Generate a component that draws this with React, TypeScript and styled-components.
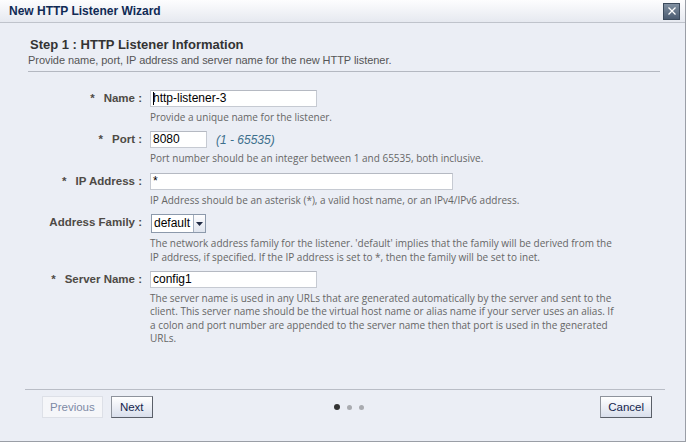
import React from 'react';
import styled, { createGlobalStyle } from 'styled-components';

const GlobalStyle = createGlobalStyle`
  html, body {
    margin: 0;
    padding: 0;
    background: #ebeef5;
  }
  body {
    font-family: "Liberation Sans", Arial, sans-serif;
  }
`;

const Dialog = styled.div`
  width: 686px;
  height: 442px;
  box-sizing: border-box;
  background: #ebeef5;
  border-right: 1px solid #9a9ea6;
  border-bottom: 1px solid #9a9ea6;
  display: flex;
  flex-direction: column;
`;

const TitleBar = styled.div`
  height: 23px;
  box-sizing: border-box;
  display: flex;
  align-items: center;
  justify-content: space-between;
  padding: 0 5px 0 9px;
  background: linear-gradient(#fdfdfe, #e6e9f0);
  border-bottom: 1px solid #bfc3cb;
`;

const Title = styled.div`
  font-size: 12px;
  font-weight: bold;
  color: #102a55;
`;

const CloseBox = styled.div`
  width: 17px;
  height: 17px;
  box-sizing: border-box;
  border: 1px solid #3b4a5c;
  background: linear-gradient(#8190a2, #4a5b70);
  display: flex;
  align-items: center;
  justify-content: center;
`;

const Content = styled.div`
  flex: 1;
  padding: 14px 25px 0 28px;
  display: flex;
  flex-direction: column;
`;

const StepTitle = styled.div`
  font-size: 13px;
  font-weight: bold;
  color: #333;
  line-height: 16px;
  padding-left: 2px;
`;

const StepDesc = styled.div`
  font-size: 11px;
  letter-spacing: -0.05px;
  color: #555;
  line-height: 15px;
  padding-bottom: 3px;
  border-bottom: 1px solid #b4b8c1;
`;

const Form = styled.div`
  display: grid;
  grid-template-columns: 114px 1fr;
  column-gap: 8px;
  row-gap: 7px;
  margin-top: 18px;
  align-items: start;
`;

const Label = styled.div`
  font-size: 11.5px;
  font-weight: bold;
  color: #4e4a45;
  text-align: right;
  line-height: 17px;
  white-space: nowrap;
`;

const Star = styled.span`
  margin-right: 9px;
`;

const Field = styled.div`
  display: flex;
  flex-direction: column;
`;

const FieldLine = styled.div`
  display: flex;
  align-items: center;
  gap: 9px;
`;

const TextBox = styled.div<{ $w: number }>`
  width: ${(p) => p.$w}px;
  height: 17px;
  box-sizing: border-box;
  background: #fff;
  border: 1px solid #c6cad2;
  border-top-color: #b5b9c2;
  font-size: 12px;
  line-height: 15px;
  padding-left: 2px;
  color: #000;
  position: relative;
`;

const Caret = styled.span`
  position: absolute;
  left: 2px;
  top: 1px;
  width: 1px;
  height: 13px;
  background: #000;
`;

const Range = styled.span`
  font-size: 12px;
  font-style: italic;
  color: #3d6f8c;
`;

const Hint = styled.div`
  font-family: "Open Sans", "Liberation Sans", sans-serif;
  font-size: 10px;
  color: #666;
  line-height: 13.4px;
  margin-top: 4px;
  white-space: nowrap;
`;

const Select = styled.div`
  width: 55px;
  height: 19px;
  box-sizing: border-box;
  display: flex;
  background: #fff;
  border: 1px solid #8c99ab;
  margin-left: 1px;
`;

const SelectText = styled.div`
  flex: 1;
  font-size: 12px;
  line-height: 17px;
  padding-left: 2px;
  color: #000;
  border-right: 1px solid #a6b0bf;
`;

const SelectArrow = styled.div`
  width: 11px;
  background: linear-gradient(#fdfdfe, #dfe4ee);
  display: flex;
  align-items: center;
  justify-content: center;
`;

const Footer = styled.div`
  margin: 0 20px 0 25px;
  border-top: 1px solid #b9bdc6;
  padding: 6px 13px 23px 17px;
  display: grid;
  grid-template-columns: 1fr auto 1fr;
  align-items: center;
`;

const ButtonGroup = styled.div<{ $end?: boolean }>`
  display: flex;
  gap: 8px;
  justify-content: ${(p) => (p.$end ? 'flex-end' : 'flex-start')};
`;

const Button = styled.div<{ $disabled?: boolean }>`
  height: 22px;
  min-width: 42px;
  box-sizing: border-box;
  padding: 0 7px;
  font-size: 11.5px;
  line-height: 20px;
  display: flex;
  align-items: center;
  justify-content: center;
  color: ${(p) => (p.$disabled ? '#7d8aa5' : '#14254d')};
  background: ${(p) => (p.$disabled ? '#f5f6f9' : 'linear-gradient(#ffffff, #d9dfec)')};
  border: 1px solid ${(p) => (p.$disabled ? '#dde0e7' : '#8e939c')};
  border-right-color: ${(p) => (p.$disabled ? '#dde0e7' : '#5a5f68')};
  border-bottom-color: ${(p) => (p.$disabled ? '#dde0e7' : '#5a5f68')};
`;

const Dots = styled.div`
  display: flex;
  align-items: center;
  gap: 7px;
  margin-left: 4px;
`;

const Dot = styled.span<{ $active?: boolean }>`
  width: ${(p) => (p.$active ? 6 : 5)}px;
  height: ${(p) => (p.$active ? 6 : 5)}px;
  border-radius: 50%;
  background: ${(p) => (p.$active ? '#333' : '#a9abb0')};
`;

export default function App() {
  return (
    <>
      <GlobalStyle />
      <Dialog>
        <TitleBar>
          <Title>New HTTP Listener Wizard</Title>
          <CloseBox>
            <svg width="10" height="10" viewBox="0 0 10 10">
              <path d="M1.5 1.5 L8.5 8.5 M8.5 1.5 L1.5 8.5" stroke="#fff" strokeWidth="1.3" />
            </svg>
          </CloseBox>
        </TitleBar>
        <Content>
          <StepTitle>Step 1 : HTTP Listener Information</StepTitle>
          <StepDesc>Provide name, port, IP address and server name for the new HTTP listener.</StepDesc>
          <Form>
            <Label><Star>*</Star>Name :</Label>
            <Field>
              <TextBox $w={167}><Caret />http-listener-3</TextBox>
              <Hint>Provide a unique name for the listener.</Hint>
            </Field>

            <Label><Star>*</Star>Port :</Label>
            <Field>
              <FieldLine>
                <TextBox $w={57}>8080</TextBox>
                <Range>(1 - 65535)</Range>
              </FieldLine>
              <Hint>Port number should be an integer between 1 and 65535, both inclusive.</Hint>
            </Field>

            <Label><Star>*</Star>IP Address :</Label>
            <Field>
              <TextBox $w={303}>*</TextBox>
              <Hint>IP Address should be an asterisk (*), a valid host name, or an IPv4/IPv6 address.</Hint>
            </Field>

            <Label>Address Family :</Label>
            <Field>
              <Select>
                <SelectText>default</SelectText>
                <SelectArrow>
                  <svg width="7" height="4" viewBox="0 0 7 4">
                    <path d="M0 0 H7 L3.5 4 Z" fill="#1f2a44" />
                  </svg>
                </SelectArrow>
              </Select>
              <Hint>
                The network address family for the listener. 'default' implies that the family will be derived from the
                <br />
                IP address, if specified. If the IP address is set to *, then the family will be set to inet.
              </Hint>
            </Field>

            <Label><Star>*</Star>Server Name :</Label>
            <Field>
              <TextBox $w={167}>config1</TextBox>
              <Hint>
                The server name is used in any URLs that are generated automatically by the server and sent to the
                <br />
                client. This server name should be the virtual host name or alias name if your server uses an alias. If
                <br />
                a colon and port number are appended to the server name then that port is used in the generated
                <br />
                URLs.
              </Hint>
            </Field>
          </Form>
        </Content>
        <Footer>
          <ButtonGroup>
            <Button $disabled>Previous</Button>
            <Button>Next</Button>
          </ButtonGroup>
          <Dots>
            <Dot $active />
            <Dot />
            <Dot />
          </Dots>
          <ButtonGroup $end>
            <Button>Cancel</Button>
          </ButtonGroup>
        </Footer>
      </Dialog>
    </>
  );
}
